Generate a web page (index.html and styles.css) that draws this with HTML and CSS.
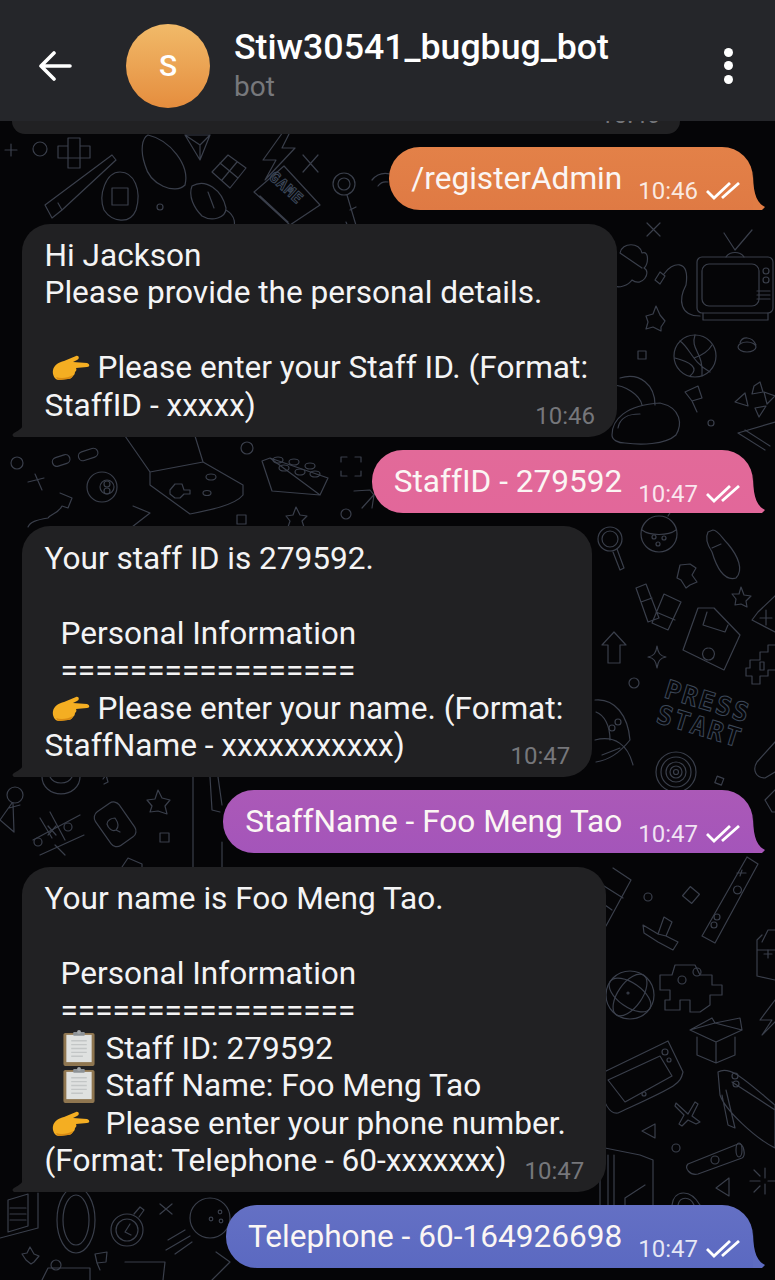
FILE: index.html
```html
<!DOCTYPE html>
<html lang="en">
<head>
    <meta charset="UTF-8">
    <meta name="viewport" content="width=device-width, initial-scale=1.0">
    <title>Stiw30541_bugbug_bot</title>
    <link rel="stylesheet" href="styles.css">
</head>
<body>

<svg width="0" height="0" class="defs">
    <symbol id="hand" viewBox="0 0 38 26">
        <path d="M1 15C2 10 7 7 12 6L24 1C27 0 28 4 25 5L21 7L35 8C38 9 38 12 35 12L24 13C25 15 24 16 23 17C23 19 22 20 21 21C20 23 18 24 16 24L7 25C3 25 0 20 1 15Z" fill="#f4ae22"/>
        <path d="M4 22C9 24 16 23 21 20C20 23 18 24 16 24L7 25C6 25 5 24 4 22Z" fill="#d98a12"/>
    </symbol>
    <symbol id="clipboard" viewBox="0 0 32 37">
        <rect x="0" y="3" width="32" height="34" rx="2" fill="#8f7650"/>
        <rect x="3" y="5" width="26" height="28" fill="#dfe1e0"/>
        <path d="M8 11H24M8 15H24M8 19H24M8 23H24M8 27H20" stroke="#c3c6c6" stroke-width="1.4"/>
        <rect x="10" y="2" width="12" height="4" rx="1" fill="#8d9296"/>
        <circle cx="16" cy="2" r="2" fill="#a3a7aa"/>
    </symbol>
    <symbol id="ticks" viewBox="0 0 34 18">
        <path d="M1 9L8 16L24 1M16 16L33 1" fill="none" stroke="currentColor" stroke-width="2.8"/>
    </symbol>
</svg>

<div class="screen">
    <div class="topbar">
        <svg class="back-icon" viewBox="0 0 34 30"><path d="M32 15H3M16 2L3 15L16 28" fill="none" stroke="#fff" stroke-width="3.6" stroke-linecap="round" stroke-linejoin="round"/></svg>
        <div class="avatar">S</div>
        <div class="peer">
            <div class="peer-name">Stiw30541_bugbug_bot</div>
            <div class="peer-status">bot</div>
        </div>
        <div class="more-icon"><span></span><span></span><span></span></div>
    </div>

    <div class="chat">
        <svg class="wallpaper" viewBox="0 121 775 1159" width="775" height="1159">
            <g fill="none" stroke="#3a3f4b" stroke-width="1.2" stroke-linecap="round" stroke-linejoin="round">
                <!-- top strip -->
                <path d="M5 150H17M11 144V156"/>
                <circle cx="40" cy="149" r="7"/>
                <path d="M58 146H68V138H80V146H90V158H80V168H68V158H58ZM68 146V158H80V146"/>
                <path d="M45 205L112 155L116 160L62 210L58 203M45 205L52 218L62 210"/>
                <path d="M120 172C134 172 142 190 136 210C130 225 112 222 104 210C98 195 106 172 120 172ZM112 188H128V205H112Z"/>
                <path d="M148 135C170 140 190 165 185 185C175 195 150 185 145 165C140 150 142 138 148 135Z"/>
                <circle cx="160" cy="207" r="3"/>
                <path d="M185 135H210L200 160ZM185 135L200 145L210 135M200 145V160"/>
                <path d="M212 172L228 155L246 168L230 188ZM220 163L238 178M237 162L222 180"/>
                <path d="M283 132L263 160H276L265 180L295 148H282L290 132"/>
                <path d="M303 155L318 172M318 155L303 172"/>
                <path d="M254 192L284 166L320 205L290 225ZM260 196L288 222"/>
                <path d="M192 186C206 178 222 190 226 208C226 218 212 222 202 216C194 208 188 196 192 186ZM208 192L214 208M226 210C236 216 236 225 232 232"/>
                <circle cx="344" cy="184" r="11"/><circle cx="344" cy="184" r="6"/>
                <path d="M347 195L358 232H350L346 222M350 210L356 207"/>
                <path d="M372 180A18 18 0 0 1 390 174M378 186A10 10 0 0 1 388 182"/>
                <!-- right top -->
                <path d="M647 223L660 236M660 223L647 236"/>
                <path d="M620 253C622 242 640 242 642 253C650 250 648 266 644 268C652 272 642 288 632 280C628 286 618 288 616 286M620 253L642 268"/>
                <path d="M655 280L660 272L665 276L660 284ZM664 274C672 262 690 258 686 285C678 300 680 316 700 316"/>
                <rect x="697" y="257" width="76" height="56" rx="5"/>
                <rect x="702" y="264" width="57" height="42" rx="7"/>
                <path d="M703 313V320H768V313M726 257A10 8 0 0 1 744 257M735 250L724 233M735 250L752 230M757 291H770M757 295H770M757 299H770"/>
                <circle cx="766" cy="271" r="3"/><circle cx="766" cy="280" r="3"/>
                <path d="M656 306L660 315L665 321L661 327L661 331L653 327L646 329L648 322L646 316L653 314Z"/>
                <rect x="638" y="351" width="8" height="8"/>
                <circle cx="695" cy="356" r="21"/>
                <path d="M680 341C690 348 692 362 710 372M695 335C690 350 704 352 702 376M675 358C690 362 700 368 690 376M712 345C708 352 700 356 694 358"/>
                <ellipse cx="747" cy="347" rx="9" ry="5"/><path d="M740 343C742 336 752 336 756 345"/>
                <path d="M685 392L698 386L702 398L692 401ZM692 401L697 412"/>
                <path d="M754 386L760 382L763 392L752 394ZM735 402L745 393L748 406ZM764 392L775 396L767 404ZM755 408L766 406L759 417Z"/>
                <circle cx="711" cy="423" r="3"/>
                <path d="M612 435C612 420 625 405 660 403C682 408 682 425 676 435C665 445 640 445 625 443C618 443 612 440 612 435ZM618 428C620 416 630 414 640 414M620 378C640 372 655 385 655 405M612 385C625 385 640 395 642 405"/>
                <path d="M738 433L775 422M738 433L765 450M745 430L770 446"/>
                <!-- band under the first reply -->
                <circle cx="17" cy="463" r="6"/>
                <rect x="52" y="456" width="18" height="9" rx="4.5" transform="rotate(-18 61 460)"/>
                <rect x="78" y="450" width="20" height="9" rx="4.5" transform="rotate(-18 88 454)"/>
                <path d="M28 482L44 478M35 474L42 490"/>
                <circle cx="102" cy="487" r="15"/><circle cx="107" cy="487" r="7"/><circle cx="107" cy="484" r="3"/><circle cx="107" cy="491" r="3"/>
                <path d="M125 436L150 472L203 462L195 436M150 472V485L190 514C210 510 235 505 243 495V485L203 462M170 490L175 484H182L184 490H190V494H184L180 498H175L170 494Z"/>
                <ellipse cx="211" cy="477" rx="5" ry="3"/><ellipse cx="207" cy="493" rx="4" ry="2.5"/>
                <circle cx="247" cy="448" r="6"/>
                <path d="M262 461L270 458L328 478L320 495L272 491ZM262 461L272 491M320 495L270 458"/>
                <ellipse cx="278" cy="460" rx="5" ry="3"/><ellipse cx="294" cy="462" rx="5" ry="3"/><ellipse cx="310" cy="466" rx="5" ry="3"/><ellipse cx="284" cy="468" rx="5" ry="3"/><ellipse cx="300" cy="472" rx="5" ry="3"/><ellipse cx="315" cy="474" rx="5" ry="3"/>
                <path d="M341 462V457H347M355 457H361V462M341 471V476H347M361 471V476H355"/>
                <path d="M354 491L370 490L374 495L372 508M362 508L380 488"/><circle cx="346" cy="514" r="5"/>
                <rect x="237" y="515" width="9" height="9"/>
                <path d="M296 507L300 515L307 516L302 521L304 527H288L290 521L286 516L293 515Z"/>
                <path d="M133 506L150 513L132 527"/>
                <path d="M60 493L72 498L68 508L62 506C58 514 50 514 48 518C36 520 30 522 28 527"/>
                <!-- right of the pink message -->
                <circle cx="610" cy="539" r="12"/><circle cx="610" cy="539" r="8"/><path d="M617 549L624 568L620 570L613 552"/>
                <circle cx="659" cy="534" r="18"/><path d="M642 530C650 536 668 536 676 530M668 516L675 505"/><circle cx="654" cy="537" r="2"/><circle cx="664" cy="538" r="2"/><circle cx="658" cy="544" r="2"/>
                <path d="M708 532C705 538 708 546 712 552C715 562 722 582 736 578C744 570 738 556 728 544C722 538 718 530 713 530Z M712 548L721 544"/>
                <path d="M680 565L690 564L696 568L692 575L697 582L690 585L686 588L681 580L677 578Z"/>
                <path d="M741 587L744 595L751 596L746 601L747 607L741 604L735 605L736 599L732 594L739 594Z"/>
                <path d="M636 588L646 584L659 618L648 622ZM641 602L652 598M664 594L681 602L668 630L652 623ZM656 612L675 620"/>
                <path d="M714 608L740 635L724 670L683 650L698 608ZM707 612L703 625L725 632L728 625M708 648A6 6 0 1 0 709 648"/>
                <path d="M614 632L626 645H620V663H608V645H602Z"/>
                <path d="M657 646C658 653 660 656 666 657C660 658 658 661 657 668C656 661 654 658 648 657C654 656 656 653 657 646Z"/>
                <circle cx="634" cy="683" r="5"/>
                <path d="M595 700C615 698 628 716 630 740C622 750 610 760 596 762M596 712C604 715 610 725 610 740"/>
                <circle cx="612" cy="728" r="3"/><circle cx="618" cy="722" r="3"/>
                <path d="M775 645H768V652H760V660H750V668H746V676H752V684H760V676H768V670H775"/><rect x="760" y="662" width="4" height="8"/>
                <path d="M775 596L758 612L752 620L775 632M766 610V625M760 618H772"/>
                <!-- middle right -->
                <circle cx="676" cy="772" r="20"/><circle cx="676" cy="772" r="15"/><circle cx="676" cy="772" r="10"/><circle cx="676" cy="772" r="6"/><circle cx="676" cy="772" r="2.5"/>
                <rect x="716" y="777" width="7" height="7" transform="rotate(20 719 780)"/>
                <path d="M775 742L757 762C752 770 756 778 765 778L775 772"/>
                <path d="M775 790L765 800L772 812L775 812"/>
                <path d="M595 740C615 735 628 745 633 765M602 755L620 748"/>
                <path d="M747 857L758 864L715 943L702 936ZM742 870L740 876M737 873L746 873M737 886A4 4 0 1 0 738 886"/><circle cx="717" cy="917" r="3"/><circle cx="714" cy="925" r="3"/>
                <path d="M613 868L631 880L606 926M604 886L623 898M605 905L612 910"/>
                <circle cx="648" cy="897" r="4"/>
                <rect x="685" y="889" width="12" height="12" transform="rotate(40 691 895)"/>
                <path d="M643 925L658 934L664 917L672 922L666 936L678 942L673 950L658 942L644 933ZM658 934L666 936"/>
                <path d="M762 935L757 940V976L775 980M757 950H775"/>
                <path d="M762 942L768 930H775M768 950V958M764 954H772"/>
                <path d="M660 975L672 975L675 965H695L700 975H712V985H722V995H710V1005L700 1012H690V1000H680V1010H665V1000H670V990H660Z"/>
                <circle cx="682" cy="980" r="4"/><circle cx="697" cy="972" r="4"/>
                <circle cx="630" cy="995" r="24"/><ellipse cx="630" cy="995" rx="24" ry="12" transform="rotate(35 630 995)"/><ellipse cx="630" cy="995" rx="24" ry="12" transform="rotate(-55 630 995)"/><circle cx="628" cy="993" r="1"/>
                <path d="M690 1030L715 1023L742 1030L716 1042ZM715 1023L740 1018L742 1030M690 1030L712 1018L715 1023M697 1037V1055L716 1063L735 1055V1037M716 1042V1063"/>
                <path d="M760 1020L775 1000M760 1020H772L762 1035L775 1022"/>
                <path d="M604 1072L668 1041L683 1072C680 1085 676 1086 618 1113C612 1114 605 1110 600 1085ZM608 1080L660 1056L672 1076L625 1102Z"/>
                <circle cx="665" cy="1052" r="3"/><circle cx="669" cy="1060" r="2"/><circle cx="644" cy="1094" r="2"/>
                <path d="M718 1072C730 1065 745 1080 775 1105V1148C755 1138 725 1110 720 1095ZM732 1082L775 1110M722 1095L728 1125L735 1128L726 1090"/>
                <circle cx="735" cy="1076" r="3"/><circle cx="736" cy="1084" r="3"/>
                <path d="M676 1103L688 1114L695 1102L698 1104L692 1116L700 1122L696 1124L688 1120L682 1126L679 1124L684 1115L675 1106Z"/>
                <path d="M655 1124V1138L642 1131Z"/>
                <circle cx="676" cy="1148" r="4"/>
                <path d="M688 1164L738 1144C744 1142 746 1156 742 1158L698 1174C690 1176 684 1168 688 1164Z"/><circle cx="715" cy="1160" r="4"/><ellipse cx="739" cy="1150" rx="3" ry="7"/>
                <path d="M729 1178V1196L716 1188Z"/>
                <path d="M765 1178V1168M765 1194V1184M750 1181H760M775 1181H768M754 1170L760 1176M754 1192L760 1186"/>
                <path d="M600 1147L640 1155L653 1160V1205M600 1147V1205M608 1155V1205M614 1155V1205M625 1205V1198L645 1185"/>
                <path d="M672 1205C674 1190 690 1188 700 1205M678 1205C680 1196 690 1196 694 1205"/>
                <!-- left under the pink name -->
                <circle cx="15" cy="795" r="8"/>
                <path d="M12 803L0 820L14 832L13 803M9 808L20 805"/>
                <path d="M40 818L52 838M50 812L65 840M33 840L80 815M40 855L84 835"/>
                <path d="M48 826L56 835M56 826L48 835M55 845L65 855"/><circle cx="68" cy="827" r="4"/><circle cx="38" cy="842" r="4"/>
                <path d="M42 777A18 16 0 0 0 80 777M50 777A12 10 0 0 0 72 777"/>
                <rect x="101" y="804" width="29" height="41" rx="7" transform="rotate(-35 115 825)"/>
                <path d="M115 818C120 825 118 828 116 830C112 832 108 828 107 824C107 820 112 818 115 818ZM116 830L120 832"/>
                <path d="M158 790L162 798L170 800L165 806L167 814L158 811L150 812L152 806L147 800L155 799Z"/>
                <rect x="160" y="833" width="9" height="9"/>
                <path d="M103 779L106 775L108 782L104 784"/>
                <path d="M193 777V867"/>
                <path d="M210 777L212 810L220 812M218 777L222 805"/>
                <path d="M222 842V867"/>
                <path d="M122 867L128 858L142 864V867"/>
                <!-- bottom strip -->
                <path d="M0 1238L38 1228V1193M8 1200L28 1194V1226L8 1232ZM10 1208H26M10 1214H26M10 1220H26"/>
                <ellipse cx="76" cy="1220" rx="19" ry="33"/><ellipse cx="76" cy="1220" rx="13" ry="25"/>
                <circle cx="127" cy="1230" r="16"/><circle cx="127" cy="1230" r="11"/><path d="M130 1224L125 1232L131 1235M134 1214L140 1207L144 1210L139 1217"/>
                <path d="M160 1204L172 1214M172 1204L160 1214"/>
                <circle cx="210" cy="1218" r="20"/><circle cx="220" cy="1212" r="1.8"/><circle cx="211" cy="1219" r="1.8"/><circle cx="221" cy="1221" r="1.8"/>
                <path d="M168 1240L185 1230M166 1250L190 1236M175 1254L192 1242"/>
                <path d="M30 1247L34 1254L39 1256L34 1262L31 1264L26 1260L22 1254L27 1253Z"/>
                <path d="M95 1254L107 1252L106 1262L97 1263ZM97 1263L100 1270"/>
                <circle cx="56" cy="1265" r="5"/>
                <path d="M42 1280L48 1268H90V1280M125 1262L165 1262L163 1280"/>
                <path d="M216 1252L230 1262L222 1270L212 1280"/>
            </g>
            <g fill="none" stroke="#3c4758" stroke-width="1">
                <text class="doodle-word" x="0" y="0" transform="translate(663 697) rotate(17)">PRESS</text>
                <text class="doodle-word" x="0" y="0" transform="translate(655 722) rotate(17)">START</text>
                <text class="doodle-word small" x="0" y="0" transform="translate(268 178) rotate(42)">GAME</text>
            </g>
        </svg>

        <div class="bubble in peek"><span class="time">10:46</span></div>

        <div class="bubble out orange">
            <span>/registerAdmin</span>
            <span class="meta">10:46 <svg class="ticks"><use href="#ticks"/></svg></span>
            <svg class="tail" viewBox="0 0 12 40"><path d="M0 0C0 20 2 32 12 37L9 40H0Z" fill="#e07c44"/></svg>
        </div>

        <div class="bubble in">
            <div class="line">Hi Jackson</div>
            <div class="line">Please provide the personal details.</div>
            <div class="line">&nbsp;</div>
            <div class="line"><svg class="hand"><use href="#hand"/></svg>Please enter your Staff ID. (Format:</div>
            <div class="last-line"><span>StaffID - xxxxx)</span><span class="time">10:46</span></div>
            <svg class="tail-in" viewBox="0 0 12 14"><path d="M12 0C11 4 8 7 2 10C0 11 0 13 2 14H12Z" fill="#212123"/></svg>
        </div>

        <div class="bubble out pink">
            <span>StaffID - 279592</span>
            <span class="meta">10:47 <svg class="ticks"><use href="#ticks"/></svg></span>
            <svg class="tail" viewBox="0 0 12 40"><path d="M0 0C0 20 2 32 12 37L9 40H0Z" fill="#e2689a"/></svg>
        </div>

        <div class="bubble in">
            <div class="line">Your staff ID is 279592.</div>
            <div class="line">&nbsp;</div>
            <div class="line indent">Personal Information</div>
            <div class="line indent">=================</div>
            <div class="line"><svg class="hand"><use href="#hand"/></svg>Please enter your name. (Format:</div>
            <div class="last-line"><span>StaffName - xxxxxxxxxxx)</span><span class="time">10:47</span></div>
            <svg class="tail-in" viewBox="0 0 12 14"><path d="M12 0C11 4 8 7 2 10C0 11 0 13 2 14H12Z" fill="#212123"/></svg>
        </div>

        <div class="bubble out purple">
            <span>StaffName - Foo Meng Tao</span>
            <span class="meta">10:47 <svg class="ticks"><use href="#ticks"/></svg></span>
            <svg class="tail" viewBox="0 0 12 40"><path d="M0 0C0 20 2 32 12 37L9 40H0Z" fill="#a756b8"/></svg>
        </div>

        <div class="bubble in">
            <div class="line">Your name is Foo Meng Tao.</div>
            <div class="line">&nbsp;</div>
            <div class="line indent">Personal Information</div>
            <div class="line indent">=================</div>
            <div class="line indent"><svg class="clip"><use href="#clipboard"/></svg>Staff ID: 279592</div>
            <div class="line indent"><svg class="clip"><use href="#clipboard"/></svg>Staff Name: Foo Meng Tao</div>
            <div class="line"><svg class="hand wide"><use href="#hand"/></svg>Please enter your phone number.</div>
            <div class="last-line"><span>(Format: Telephone - 60-xxxxxxx)</span><span class="time">10:47</span></div>
            <svg class="tail-in" viewBox="0 0 12 14"><path d="M12 0C11 4 8 7 2 10C0 11 0 13 2 14H12Z" fill="#212123"/></svg>
        </div>

        <div class="bubble out blue">
            <span>Telephone - 60-164926698</span>
            <span class="meta">10:47 <svg class="ticks"><use href="#ticks"/></svg></span>
            <svg class="tail" viewBox="0 0 12 40"><path d="M0 0C0 20 2 32 12 37L9 40H0Z" fill="#5e6cc2"/></svg>
        </div>
    </div>
</div>

</body>
</html>
```

FILE: styles.css
```css
body {
    margin: 0;
    background-color: #050507;
    font-family: Roboto, "Noto Sans", Arial, sans-serif;
}
.defs {
    display: block;
    height: 0;
}
.screen {
    width: 775px;
    height: 1280px;
    overflow: hidden;
    display: flex;
    flex-direction: column;
}
.topbar {
    flex: 0 0 121px;
    box-sizing: border-box;
    padding-top: 10px;
    display: flex;
    align-items: center;
    background-color: #25262a;
    position: relative;
    z-index: 2;
}
.back-icon {
    width: 34px;
    height: 30px;
    margin-left: 38px;
}
.avatar {
    width: 84px;
    height: 84px;
    margin-left: 54px;
    border-radius: 50%;
    background: linear-gradient(#f1ba69, #e58d3e);
    color: #fff;
    font-size: 30px;
    font-weight: 500;
    display: flex;
    align-items: center;
    justify-content: center;
}
.peer {
    margin-left: 24px;
    flex: 1;
}
.peer-name {
    color: #fff;
    font-size: 35.7px;
    font-weight: 500;
    line-height: 42px;
}
.peer-status {
    color: #77787c;
    font-size: 28px;
    line-height: 38px;
}
.more-icon {
    display: flex;
    flex-direction: column;
    gap: 4.5px;
    margin-right: 42px;
}
.more-icon span {
    width: 9px;
    height: 9px;
    border-radius: 50%;
    background-color: #fff;
}
.chat {
    flex: 1;
    min-height: 0;
    position: relative;
    display: flex;
    flex-direction: column;
    align-items: flex-start;
    gap: 13.2px;
}
.wallpaper {
    position: absolute;
    top: 0;
    left: 0;
}
.doodle-word {
    font-family: "DejaVu Sans Mono", monospace;
    font-size: 26px;
    font-weight: bold;
    letter-spacing: 2px;
}
.doodle-word.small {
    font-size: 15px;
    letter-spacing: 1px;
}
.bubble {
    flex: none;
    position: relative;
    box-sizing: border-box;
    color: #f4f4f5;
    font-size: 31.6px;
    line-height: 37.4px;
    white-space: nowrap;
    padding: 13.5px 29px 12.5px 23px;
    border-radius: 28px;
}
.bubble.in {
    margin-left: 22px;
    padding-left: 22.5px;
    background-color: #212123;
    border-bottom-left-radius: 0;
}
.bubble.peek {
    margin-left: 12px;
    width: 668px;
    height: 12.8px;
    padding: 0;
    border-radius: 0 0 24px 24px;
    overflow: hidden;
    display: flex;
    justify-content: flex-end;
}
.bubble.peek .time {
    align-self: flex-start;
    margin: -20px 20px 0 0;
}
.bubble.out {
    align-self: flex-end;
    margin-right: 22px;
    display: flex;
    padding: 13px 13px 13px 22px;
    color: #fbf6f4;
    border-radius: 31px;
    border-bottom-right-radius: 0;
}
.orange { background: linear-gradient(#e38148, #df7a44); }
.pink { background: linear-gradient(#e26a99, #e2679a); }
.purple { background: linear-gradient(#ab59b7, #a455ba); }
.blue { background: linear-gradient(#6470c4, #5b69c1); }
.tail {
    position: absolute;
    right: -12px;
    bottom: 0;
    width: 12px;
    height: 40px;
}
.tail-in {
    position: absolute;
    left: -10px;
    bottom: 0;
    width: 12px;
    height: 14px;
}
.indent {
    padding-left: 16px;
}
.line {
    min-height: 37.4px;
}
.last-line {
    display: flex;
    justify-content: space-between;
    gap: 18px;
    margin-right: -7px;
}
.time {
    color: #76777b;
    font-size: 24px;
    line-height: 28px;
    align-self: flex-end;
    margin-bottom: -6px;
}
.meta {
    display: flex;
    align-items: center;
    gap: 8px;
    margin-left: 16px;
    margin-bottom: -12px;
    padding-top: 12px;
    font-size: 24px;
    line-height: 28px;
    color: rgba(255, 255, 255, 0.85);
}
.ticks {
    width: 34px;
    height: 18px;
    color: #fff;
}
.hand {
    width: 38px;
    height: 26px;
    margin: 0 8px 0 7px;
    vertical-align: -3px;
}
.hand.wide {
    margin-right: 16px;
}
.clip {
    width: 36px;
    height: 36px;
    margin-right: 9px;
    vertical-align: -7px;
}
```
